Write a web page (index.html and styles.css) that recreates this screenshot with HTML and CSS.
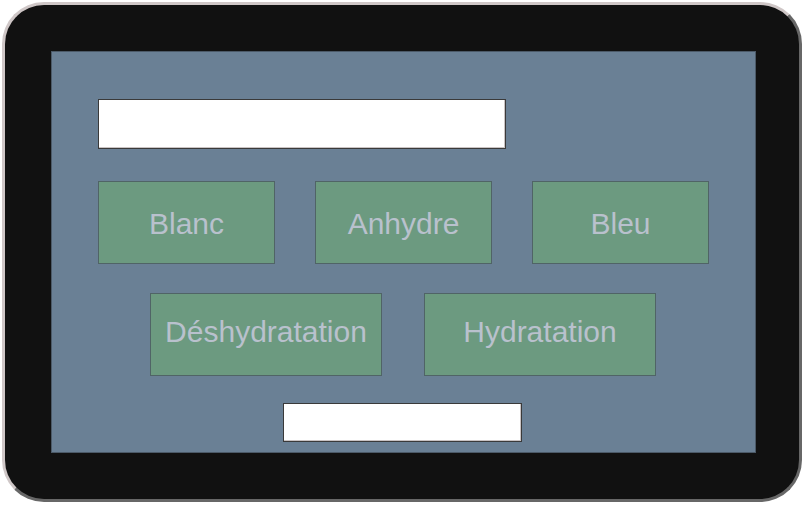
FILE: index.html
```html
<!DOCTYPE html>
<html lang="fr">
<head>
    <meta charset="UTF-8">
    <meta name="viewport" content="width=device-width, initial-scale=1.0">
    <title>Tablette</title>
    <link rel="stylesheet" href="styles.css">
</head>
<body>
    <div class="tablet">
        <div class="screen">
            <div class="field field-top"></div>

            <div class="row row-first">
                <button class="tile">Blanc</button>
                <button class="tile">Anhydre</button>
                <button class="tile">Bleu</button>
            </div>

            <div class="row row-second">
                <button class="tile tile-wide">Déshydratation</button>
                <button class="tile tile-wide">Hydratation</button>
            </div>

            <div class="field field-bottom"></div>
        </div>
    </div>
</body>
</html>
```

FILE: styles.css
```css
body {
    margin: 0;
    background: #ffffff;
    font-family: 'Liberation Sans', Arial, sans-serif;
}
.tablet {
    box-sizing: border-box;
    width: 800px;
    height: 500px;
    margin: 2px 0 0 2px;
    padding: 46px 0 0 46px;
    border: 3px solid;
    border-color: #cfc7c7 #676767 #676767 #cfc7c7;
    border-radius: 42px;
    background: #111111;
}
.screen {
    box-sizing: border-box;
    width: 705px;
    height: 402px;
    padding: 47px 0 0 46px;
    background: #6a8095;
    border: 1px solid #4c5a68;
    display: flex;
    flex-direction: column;
    align-items: flex-start;
}
.field {
    box-sizing: border-box;
    background: #ffffff;
    border: 1px solid #3a3a3a;
    box-shadow: inset -1px -1px 0 #c9c3c3;
}
.field-top {
    width: 408px;
    height: 50px;
}
.field-bottom {
    width: 239px;
    height: 39px;
    margin: 27px 0 0 185px;
}
.row {
    display: flex;
}
.row-first {
    gap: 40px;
    margin-top: 32px;
}
.row-second {
    gap: 42px;
    margin: 29px 0 0 52px;
}
.tile {
    box-sizing: border-box;
    width: 177px;
    height: 83px;
    padding: 2px 0 0;
    background: #6c9a80;
    border: 1px solid #506466;
    color: #b9c1cd;
    font-family: 'Liberation Sans', Arial, sans-serif;
    font-size: 30px;
    cursor: pointer;
}
.tile-wide {
    width: 232px;
    padding: 0 0 6px;
}
```
